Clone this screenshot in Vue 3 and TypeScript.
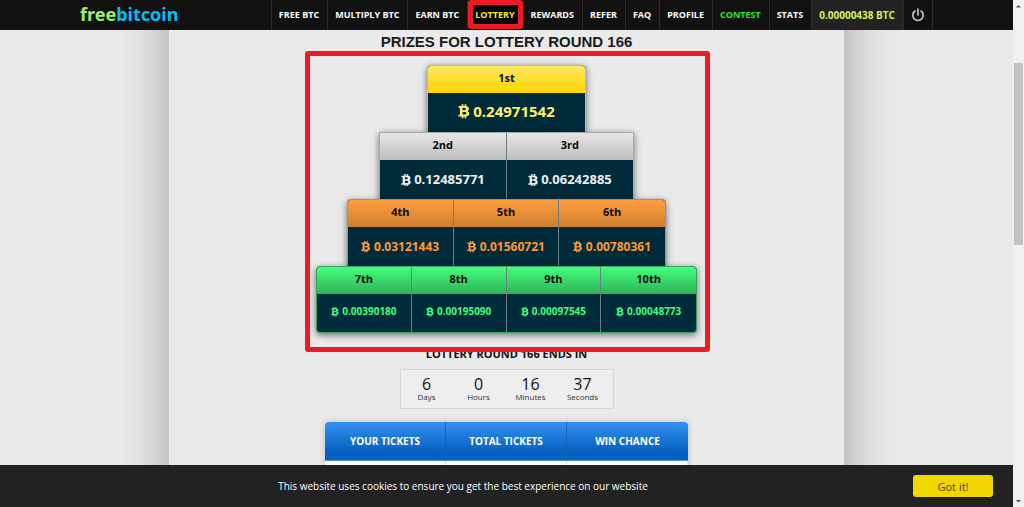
<script setup lang="ts">
interface NavItem {
  label: string
  kind?: 'active' | 'contest' | 'balance'
}

interface Prize {
  place: string
  amount: string
}

interface Tier {
  name: string
  prizes: Prize[]
}

const navItems: NavItem[] = [
  { label: 'FREE BTC' },
  { label: 'MULTIPLY BTC' },
  { label: 'EARN BTC' },
  { label: 'LOTTERY', kind: 'active' },
  { label: 'REWARDS' },
  { label: 'REFER' },
  { label: 'FAQ' },
  { label: 'PROFILE' },
  { label: 'CONTEST', kind: 'contest' },
  { label: 'STATS' },
  { label: '0.00000438 BTC', kind: 'balance' },
]

const tiers: Tier[] = [
  { name: 'gold', prizes: [{ place: '1st', amount: '0.24971542' }] },
  {
    name: 'silver',
    prizes: [
      { place: '2nd', amount: '0.12485771' },
      { place: '3rd', amount: '0.06242885' },
    ],
  },
  {
    name: 'bronze',
    prizes: [
      { place: '4th', amount: '0.03121443' },
      { place: '5th', amount: '0.01560721' },
      { place: '6th', amount: '0.00780361' },
    ],
  },
  {
    name: 'green',
    prizes: [
      { place: '7th', amount: '0.00390180' },
      { place: '8th', amount: '0.00195090' },
      { place: '9th', amount: '0.00097545' },
      { place: '10th', amount: '0.00048773' },
    ],
  },
]

const countdown = [
  { value: 6, unit: 'Days' },
  { value: 0, unit: 'Hours' },
  { value: 16, unit: 'Minutes' },
  { value: 37, unit: 'Seconds' },
]
</script>

<template>
  <div class="window">
    <div class="page">
      <header class="topbar">
        <a class="logo" href="#"><span class="logo-free">free</span><span class="logo-bitcoin">bitcoin</span></a>
        <nav class="nav">
          <a v-for="item in navItems" :key="item.label" href="#" class="nav-link" :class="item.kind">{{ item.label }}</a>
          <a href="#" class="nav-link power" aria-label="Log out">
            <svg viewBox="0 0 14 14" width="14" height="14" aria-hidden="true">
              <path d="M4 3a5.200 5.200 0 1 0 6 0M7 1v6" fill="none" stroke="currentColor" stroke-width="1.600" stroke-linecap="round" />
            </svg>
          </a>
        </nav>
      </header>

      <main class="main">
        <div class="content">
          <h1 class="title">PRIZES FOR LOTTERY ROUND 166</h1>

          <section class="pyramid">
            <div v-for="tier in tiers" :key="tier.name" class="tier" :class="tier.name">
              <div v-for="prize in tier.prizes" :key="prize.place" class="prize">
                <div class="place">{{ prize.place }}</div>
                <div class="amount">
                  <svg class="coin" viewBox="0 0 12 14" aria-hidden="true">
                    <path
                      fill="currentColor"
                      fill-rule="evenodd"
                      d="M.5 1.8h3.2V0h1.7v1.8h1.2V0h1.7v2c1.6.3 2.6 1.2 2.6 2.5 0 1.1-.6 1.9-1.6 2.3 1.3.4 2 1.3 2 2.5 0 1.7-1.2 2.7-3 2.9V14H6.600v-1.700H5.400V14H3.700v-1.700H.2l.4-1.800h1.300V3.600H.5zM4.500 3.700V6h1.700c1 0 1.600-.4 1.600-1.200s-.6-1.100-1.600-1.100zM4.500 7.800v2.600h2c1.200 0 1.900-.4 1.900-1.300s-.7-1.300-1.900-1.300z"
                    />
                  </svg>
                  <span>{{ prize.amount }}</span>
                </div>
              </div>
            </div>
            <div class="highlight"></div>
          </section>

          <h2 class="subtitle">LOTTERY ROUND 166 ENDS IN</h2>

          <div class="countdown">
            <div v-for="part in countdown" :key="part.unit" class="part">
              <span class="value">{{ part.value }}</span>
              <span class="unit">{{ part.unit }}</span>
            </div>
          </div>

          <table class="tickets">
            <thead>
              <tr>
                <th scope="col">YOUR TICKETS</th>
                <th scope="col">TOTAL TICKETS</th>
                <th scope="col">WIN CHANCE</th>
              </tr>
            </thead>
            <tbody>
              <tr>
                <td></td>
                <td></td>
                <td></td>
              </tr>
            </tbody>
          </table>
        </div>
      </main>

      <footer class="cookies">
        <p>This website uses cookies to ensure you get the best experience on our website</p>
        <button type="button">Got it!</button>
      </footer>
    </div>

    <div class="scrollbar" aria-hidden="true">
      <svg class="arrow" viewBox="0 0 11 12"><path d="M3 7.500 5.500 5 8 7.500z" fill="#505050" /></svg>
      <div class="before"></div>
      <div class="thumb"></div>
      <div class="after"></div>
      <svg class="arrow" viewBox="0 0 11 12"><path d="M3 5 5.500 7.500 8 5z" fill="#505050" /></svg>
    </div>
  </div>
</template>

<style>
body {
  margin: 0;
  background: #eaeaea;
}
</style>

<style scoped>
.window {
  display: flex;
  height: 100vh;
  overflow: hidden;
  font-family: "Open Sans", "Noto Sans", sans-serif;
  color: #111;
}

.page {
  display: flex;
  flex: 1;
  flex-direction: column;
  min-width: 0;
}

.topbar {
  display: flex;
  flex: none;
  justify-content: space-between;
  height: 30px;
  padding: 0 80px;
  background: #111;
}

.logo {
  font-family: "Noto Sans", sans-serif;
  font-size: 18px;
  font-weight: 700;
  line-height: 28px;
  text-decoration: none;
}

.logo-free {
  color: #9bf06a;
}

.logo-bitcoin {
  color: #00bff5;
}

.nav {
  display: flex;
  border-left: 1px solid #292929;
}

.nav-link {
  position: relative;
  padding: 0 8px 0 7px;
  border-right: 1px solid #292929;
  color: #fff;
  font-size: 9px;
  font-weight: 700;
  line-height: 30px;
  text-decoration: none;
  white-space: nowrap;
}

.active {
  background: #000;
  color: #f2f20d;
}

.active::after {
  content: "";
  position: absolute;
  z-index: 1;
  inset: 0 0 1px 0;
  border: 5px solid #ed1c24;
  border-radius: 3px;
}

.contest {
  color: #1df01d;
}

.balance {
  background: #222;
  color: #d3f45b;
  font-size: 10px;
}

.power {
  display: flex;
  align-items: center;
  padding: 0 7px;
  color: #ccc;
}

.main {
  flex: 1;
  min-height: 0;
  overflow: hidden;
}

.content {
  position: relative;
  z-index: 0;
  display: flex;
  flex-direction: column;
  align-items: center;
  box-sizing: border-box;
  width: 66.600%;
  height: 100%;
  margin: 0 auto;
}

.content::before {
  content: "";
  position: absolute;
  z-index: -1;
  inset: -60px 0;
  box-shadow: 0 0 50px rgba(0, 0, 0, 0.32);
  background: #eaeaea;
}

.title {
  margin: 2px 0 0;
  color: #1a1a1a;
  font-family: "Liberation Sans", Arial, sans-serif;
  font-size: 15px;
  font-weight: 700;
  line-height: 20px;
}

.pyramid {
  position: relative;
  display: flex;
  flex: none;
  flex-direction: column;
  align-items: center;
  width: 381px;
  margin-top: 13px;
}

.highlight {
  position: absolute;
  inset: -14px -13px -19px -11px;
  border: 5px solid #ed1c24;
  border-radius: 3px;
}

.tier {
  display: grid;
  grid-auto-columns: 1fr;
  grid-auto-flow: column;
  box-sizing: border-box;
  overflow: hidden;
  border: 1px solid var(--edge);
  border-bottom: 0;
  border-radius: 4px 4px 0 0;
  box-shadow: 0 2px 7px rgba(0, 0, 0, 0.55);
  background: #002b3a;
}

.prize:not(:last-child) {
  border-right: 1px solid #6b7d85;
}

.place {
  height: 27px;
  background: var(--head);
  color: #0a0a0a;
  font-size: 11px;
  font-weight: 700;
  line-height: 24px;
  text-align: center;
}

.amount {
  display: flex;
  align-items: center;
  justify-content: center;
  gap: 3px;
  box-sizing: border-box;
  height: 39px;
  padding-bottom: 1px;
  color: var(--ink);
  font-weight: 700;
}

.coin {
  width: 0.8em;
  height: 0.95em;
  margin-top: 2px;
}

.gold {
  --edge: #d8bf45;
  --head: linear-gradient(#ffe763, #ffd500);
  --ink: #fff06a;
  width: 159px;
  font-size: 15px;
}

.silver {
  --edge: #aaa;
  --head: linear-gradient(#e6e6e6, #bdbdbd);
  --ink: #eee;
  width: 255px;
  border-radius: 1px 1px 0 0;
  font-size: 13px;
}

.bronze {
  --edge: #c98745;
  --head: linear-gradient(#ff9e3d, #cd7f32);
  --ink: #ff9933;
  width: 319px;
  font-size: 12px;
}

.green {
  --edge: #38a463;
  --head: linear-gradient(#43ff7d, #2fb257);
  --ink: #3dff7c;
  width: 381px;
  border-bottom: 1px solid var(--edge);
  border-radius: 4px;
  font-size: 10px;
}

.gold .amount,
.green .amount {
  padding-bottom: 4px;
}

.green .amount {
  height: 38px;
}

.subtitle {
  flex: none;
  margin: 13px 0 0;
  font-size: 11px;
  font-weight: 700;
  line-height: 16px;
}

.countdown {
  display: flex;
  flex: none;
  box-sizing: border-box;
  width: 214px;
  height: 40px;
  margin-top: 7px;
  padding-right: 4px;
  border: 1px solid #d6d6d6;
  background: #eee;
}

.part {
  display: flex;
  flex: 1;
  flex-direction: column;
  align-items: center;
  padding-top: 6px;
}

.value {
  font-size: 16px;
  line-height: 16px;
}

.unit {
  color: #333;
  font-size: 8px;
  line-height: 10px;
}

.tickets {
  flex: none;
  width: 363px;
  margin-top: 13px;
  border-radius: 4px 4px 0 0;
  border-spacing: 0;
  box-shadow: 0 0 7px rgba(0, 0, 0, 0.2);
  table-layout: fixed;
}

.tickets th {
  height: 38px;
  padding: 0;
  border-right: 1px solid #1464b4;
  border-bottom: 1px solid #4a94da;
  background: linear-gradient(#3391f2, #0660bd 80%);
  color: #fff;
  font-size: 10px;
  font-weight: 700;
}

.tickets th:first-child {
  border-top-left-radius: 4px;
}

.tickets th:last-child {
  border-right: 0;
  border-top-right-radius: 4px;
}

.tickets td {
  height: 34px;
  padding: 0;
  border-right: 1px solid #ddd;
  background: #fffef3;
}

.cookies {
  display: flex;
  flex: none;
  align-items: center;
  height: 42px;
  padding: 0 20px 0 33px;
  background: #222;
  color: #fff;
  font-size: 10px;
}

.cookies p {
  flex: 1;
  margin: 0;
  padding-right: 20px;
  text-align: center;
}

.cookies button {
  width: 80px;
  height: 22px;
  padding: 0;
  border: 0;
  border-radius: 3px;
  background: #f1d600;
  color: #4a4200;
  font: inherit;
  font-size: 11px;
}

.scrollbar {
  display: flex;
  flex: none;
  flex-direction: column;
  width: 11px;
  background: #f1f1f1;
}

.arrow {
  flex: none;
  height: 12px;
}

.before {
  flex: 51;
}

.thumb {
  flex: 182;
  margin: 0 1px;
  background: #c1c1c1;
}

.after {
  flex: 250;
}
</style>
